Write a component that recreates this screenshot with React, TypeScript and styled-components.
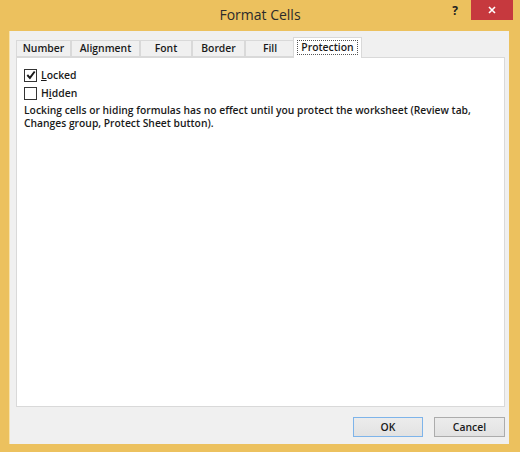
import React from 'react';
import styled, { createGlobalStyle } from 'styled-components';

const tabs = [
  { label: 'Number', width: 55 },
  { label: 'Alignment', width: 69 },
  { label: 'Font', width: 52 },
  { label: 'Border', width: 53 },
  { label: 'Fill', width: 50 },
  { label: 'Protection', width: 69, active: true },
];

const App = () => {
  return (
    <>
      <GlobalStyle />
      <Window>
        <TitleBar>
          <span />
          <Title>Format Cells</Title>
          <Controls>
            <HelpButton>?</HelpButton>
            <CloseButton aria-label='Close'>
              <svg width='8' height='8' viewBox='0 0 8 8'>
                <path d='M1 1 L7 7 M7 1 L1 7' stroke='#fff' strokeWidth='1.6' />
              </svg>
            </CloseButton>
          </Controls>
        </TitleBar>
        <Body>
          <TabRow>
            {tabs.map((tab) => (
              <Tab key={tab.label} width={tab.width} active={!!tab.active}>
                <TabLabel active={!!tab.active}>{tab.label}</TabLabel>
              </Tab>
            ))}
          </TabRow>
          <Panel>
            <CheckRow>
              <CheckBox>
                <svg width='10' height='10' viewBox='0 0 10 10'>
                  <path d='M1.3 5 L3.9 7.9 L8.7 1.5' fill='none' stroke='#1a1a1a' strokeWidth='1.9' />
                </svg>
              </CheckBox>
              <CheckLabel>
                <u>L</u>ocked
              </CheckLabel>
            </CheckRow>
            <CheckRow>
              <CheckBox />
              <CheckLabel>
                H<u>i</u>dden
              </CheckLabel>
            </CheckRow>
            <Note>
              Locking cells or hiding formulas has no effect until you protect the worksheet (Review tab,
              <br />
              Changes group, Protect Sheet button).
            </Note>
          </Panel>
          <Footer>
            <Button isDefault>OK</Button>
            <Button>Cancel</Button>
          </Footer>
        </Body>
      </Window>
    </>
  );
};

export default App;

const GlobalStyle = createGlobalStyle`
  body {
    margin: 0;
    font-family: 'Open Sans', 'Noto Sans', sans-serif;
  }
`;

const Window = styled.div`
  width: 520px;
  height: 452px;
  display: flex;
  flex-direction: column;
  background: #ecc15e;
  box-sizing: border-box;
`;

const TitleBar = styled.div`
  height: 31px;
  display: grid;
  grid-template-columns: 1fr auto 1fr;
  align-items: start;
`;

const Title = styled.div`
  font-size: 14px;
  color: #2b2b2b;
  line-height: 30px;
`;

const Controls = styled.div`
  display: flex;
  justify-content: flex-end;
  align-items: flex-start;
  padding-right: 7px;
`;

const HelpButton = styled.div`
  width: 30px;
  height: 20px;
  margin-right: 1px;
  padding-top: 1px;
  box-sizing: border-box;
  font-size: 12px;
  font-weight: 700;
  color: #222;
  display: flex;
  align-items: center;
  justify-content: center;
`;

const CloseButton = styled.div`
  width: 42px;
  height: 20px;
  background: #c6393e;
  display: flex;
  align-items: center;
  justify-content: center;
`;

const Body = styled.div`
  flex: 1;
  display: flex;
  flex-direction: column;
  margin: 0 11px 8px 9px;
  padding: 6px 4px 0 6px;
  background: #f0f0f0;
  border-left: 1px solid #f7e2ad;
  box-sizing: border-box;
`;

const TabRow = styled.div`
  display: flex;
  align-items: flex-end;
  height: 20px;
  position: relative;
  z-index: 1;
`;

const Tab = styled.div<{ width: number; active: boolean }>`
  width: ${({ width }) => width}px;
  height: ${({ active }) => (active ? 21 : 17)}px;
  margin-left: ${({ active }) => (active ? -2 : 0)}px;
  margin-bottom: ${({ active }) => (active ? -1 : 0)}px;
  box-sizing: border-box;
  display: flex;
  align-items: center;
  justify-content: center;
  background: ${({ active }) => (active ? '#fff' : '#f0f0f0')};
  border: 1px solid #d9d9d9;
  border-bottom: ${({ active }) => (active ? 'none' : '1px solid #d9d9d9')};
  & + & {
    border-left: ${({ active }) => (active ? '1px solid #d9d9d9' : 'none')};
  }
`;

const TabLabel = styled.span<{ active: boolean }>`
  font-size: 10.4px;
  font-weight: 600;
  color: #1a1a1a;
  padding: 0 3px;
  line-height: 13px;
  outline: ${({ active }) => (active ? '1px dotted #555' : 'none')};
  margin-top: ${({ active }) => (active ? -1 : 0)}px;
`;

const Panel = styled.div`
  height: 350px;
  box-sizing: border-box;
  background: #fff;
  border: 1px solid #d9d9d9;
  padding: 8px 8px 0 7px;
  display: flex;
  flex-direction: column;
`;

const CheckRow = styled.div`
  display: flex;
  align-items: center;
  gap: 4px;
  height: 18px;
`;

const CheckBox = styled.div`
  width: 11px;
  height: 11px;
  border: 1px solid #333;
  background: #fff;
  display: flex;
  align-items: center;
  justify-content: center;
`;

const CheckLabel = styled.span`
  font-size: 10.4px;
  font-weight: 600;
  color: #1a1a1a;
`;

const Note = styled.p`
  margin: 2px 0 0;
  font-size: 10.3px;
  font-weight: 600;
  line-height: 12.5px;
  color: #1a1a1a;
`;

const Footer = styled.div`
  display: flex;
  justify-content: flex-end;
  gap: 11px;
  padding-top: 10px;
`;

const Button = styled.button<{ isDefault?: boolean }>`
  width: ${({ isDefault }) => (isDefault ? 70 : 71)}px;
  height: 20px;
  font-family: 'Open Sans', 'Noto Sans', sans-serif;
  font-size: 10.4px;
  font-weight: 600;
  color: #1a1a1a;
  background: linear-gradient(#ececec, #e2e2e2);
  border: 1px solid ${({ isDefault }) => (isDefault ? '#7eb4ea' : '#acacac')};
  padding: 0;
`;
